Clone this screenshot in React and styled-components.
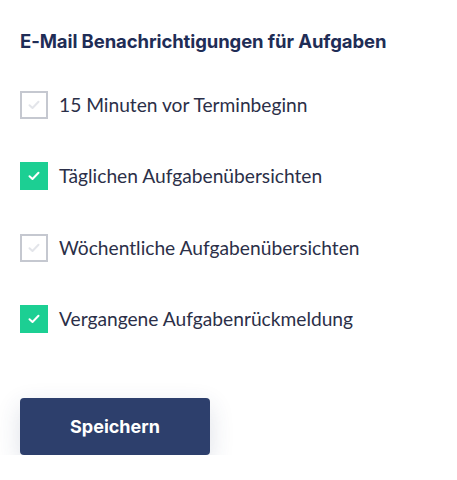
import styled, { createGlobalStyle } from 'styled-components';

const GlobalStyle = createGlobalStyle`
  body {
    margin: 0;
    background: #fff;
  }
`;

const Container = styled.div`
  padding: 30px 20px 0 20px;
  font-family: Lato, "Open Sans", sans-serif;
`;

const Heading = styled.h2`
  margin: 0 0 39px 0;
  font-family: "Inter", "Liberation Sans", sans-serif;
  font-weight: 700;
  font-size: 18.5px;
  line-height: 22px;
  color: #1f2d56;
  letter-spacing: -0.1px;
`;

const List = styled.div`
  display: flex;
  flex-direction: column;
  gap: 43.4px;
`;

const Row = styled.label`
  display: flex;
  align-items: center;
  gap: 11px;
  height: 28px;
  cursor: pointer;
`;

const Box = styled.span`
  flex: none;
  width: 28px;
  height: 28px;
  box-sizing: border-box;
  display: flex;
  align-items: center;
  justify-content: center;
  background: ${props => (props.checked ? '#1ccf93' : '#fff')};
  border: ${props => (props.checked ? 'none' : '2px solid #c5c8d0')};
`;

const Text = styled.span`
  font-size: 19.2px;
  line-height: 24px;
  color: #2b2f48;
`;

const Button = styled.button`
  display: block;
  margin-top: 65px;
  width: 190px;
  height: 57px;
  border: none;
  border-radius: 4px;
  background: #2d3f6c;
  color: #fff;
  font-family: "Inter", "Liberation Sans", sans-serif;
  font-weight: 700;
  font-size: 18px;
  box-shadow: 0 8px 24px rgba(45, 63, 108, 0.16);
  cursor: pointer;
`;

const Check = ({ checked }) => (
  <svg width="12" height="10" viewBox="0 0 12 10">
    <path
      d="M1.5 5.2 L4.5 8 L10.5 1.8"
      fill="none"
      stroke={checked ? '#fff' : '#e3e5ea'}
      strokeWidth="2"
      strokeLinecap="round"
      strokeLinejoin="round"
    />
  </svg>
);

const options = [
  { label: '15 Minuten vor Terminbeginn', checked: false },
  { label: 'Täglichen Aufgabenübersichten', checked: true },
  { label: 'Wöchentliche Aufgabenübersichten', checked: false },
  { label: 'Vergangene Aufgabenrückmeldung', checked: true },
];

export default function App() {
  return (
    <Container>
      <GlobalStyle />
      <Heading>E-Mail Benachrichtigungen für Aufgaben</Heading>
      <List>
        {options.map(o => (
          <Row key={o.label}>
            <Box checked={o.checked}>
              <Check checked={o.checked} />
            </Box>
            <Text>{o.label}</Text>
          </Row>
        ))}
      </List>
      <Button>Speichern</Button>
    </Container>
  );
}
